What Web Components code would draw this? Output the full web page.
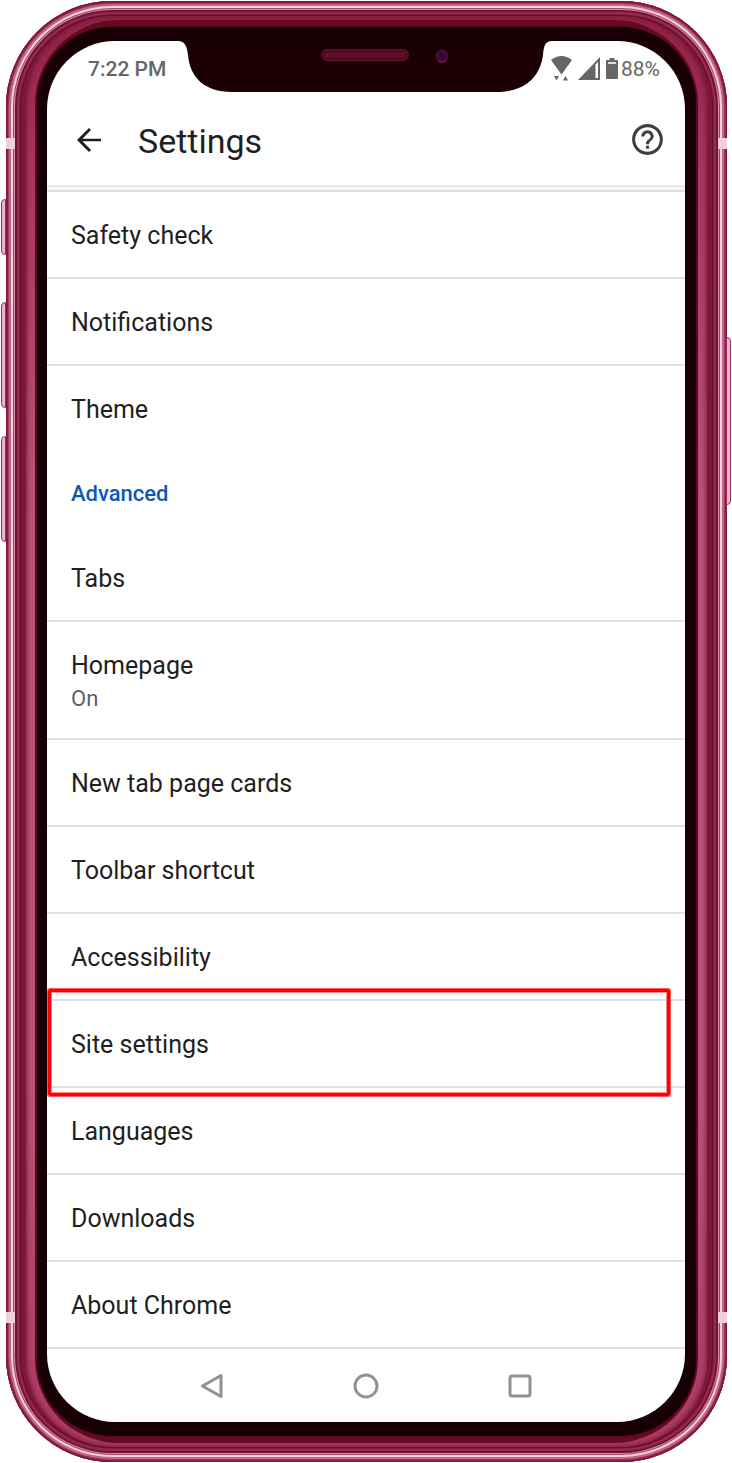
<!DOCTYPE html>
<html lang="en">
<head>
<meta charset="utf-8">
<meta name="viewport" content="width=device-width, initial-scale=1">
<title>Settings</title>
<style>
body {
    margin: 0;
    padding: 1px 5px 1px 6px;
    background: #fff;
    font-family: Roboto, "Liberation Sans", sans-serif;
    color: #1f1f1f;
}
</style>
</head>
<body>
<phone-frame>
    <status-bar time="7:22 PM" battery="88%"></status-bar>
    <app-header>Settings</app-header>
    <main>
        <settings-row>Safety check</settings-row>
        <settings-row>Notifications</settings-row>
        <settings-row last>Theme</settings-row>
        <settings-section>Advanced</settings-section>
        <settings-row>Tabs</settings-row>
        <settings-row>Homepage<span slot="summary">On</span></settings-row>
        <settings-row>New tab page cards</settings-row>
        <settings-row>Toolbar shortcut</settings-row>
        <settings-row>Accessibility</settings-row>
        <settings-row highlighted>Site settings</settings-row>
        <settings-row>Languages</settings-row>
        <settings-row>Downloads</settings-row>
        <settings-row>About Chrome</settings-row>
    </main>
    <nav-bar></nav-bar>
</phone-frame>

<script>
function makeTemplate(html) {
    const template = document.createElement('template');
    template.innerHTML = html;
    return template;
}

// shared base: clones the template of the class into an open shadow root
class BaseElement extends HTMLElement {
    constructor() {
        super();
        this.attachShadow({ mode: 'open' });
        this.shadowRoot.appendChild(this.constructor.template.content.cloneNode(true));
    }
}

class PhoneFrame extends BaseElement {
    static template = makeTemplate(`
<style>
:host {
    display: block;
    position: relative;
}
.edge {
    padding: 14px;
    border-radius: 106px;
    background: #861b40;
    box-shadow:
        inset 0 0 0 1px #7a1838,
        inset 0 0 0 2px #8a2046,
        inset 0 0 0 3px #a03a62,
        inset 0 0 0 5px #c0688c,
        inset 0 0 0 7px #f6d0df,
        inset 0 0 0 8px #a8476c,
        inset 0 0 0 9px #d48aaa,
        inset 0 0 0 11px #74122f,
        inset 0 0 0 13px #932c54;
}
.groove {
    padding: 1px 6px;
    border-radius: 92px;
    background: #7e1839;
    box-shadow: inset 0 0 0 1px #650d29;
}
.band {
    padding: 4px 9px;
    border-radius: 88px;
    background: linear-gradient(#8e2248, #a53560 10%, #b9527b 35%, #b9527b 75%, #a83a64);
    box-shadow: inset 0 0 4px 1px #80193f;
}
.rim {
    padding: 7px 2px;
    border-radius: 84px;
    background: #650a20;
}
.bezel {
    padding: 14px 11px 14px 10px;
    border-radius: 76px;
    background: #160004;
    box-shadow: 0 0 2px #3a0412;
}
.screen {
    border-radius: 68px;
    background: #fff;
}
.key {
    position: absolute;
    box-sizing: border-box;
    width: 5px;
    border: 1px solid #9c3058;
    background: #f0b4ca;
}
.left { left: -5px; border-radius: 4px 0 0 4px; }
.right { right: -4px; border-radius: 0 4px 4px 0; }
.mute { top: 198px; height: 56px; }
.up { top: 301px; height: 106px; }
.down { top: 435px; height: 106px; }
.power { top: 336px; height: 168px; }
.antenna {
    position: absolute;
    width: 9px;
    height: 11px;
    background: #f3cfdd;
}
.antenna.west { left: 0; }
.antenna.east { right: 0; }
.antenna.high { top: 137px; }
.antenna.low { bottom: 139px; }
</style>
<div class="edge"><div class="groove"><div class="band"><div class="rim"><div class="bezel">
<div class="screen"><slot></slot></div>
</div></div></div></div></div>
<i class="key left mute"></i>
<i class="key left up"></i>
<i class="key left down"></i>
<i class="key right power"></i>
<i class="antenna west high"></i>
<i class="antenna east high"></i>
<i class="antenna west low"></i>
<i class="antenna east low"></i>
`);
}

class StatusBar extends BaseElement {
    static template = makeTemplate(`
<style>
:host {
    display: grid;
    grid-template-columns: 1fr auto 1fr;
    font-size: 21px;
    line-height: 24px;
    color: #666;
}
.time {
    padding: 16px 0 0 41px;
    font-weight: 500;
    white-space: nowrap;
}
.icons {
    display: flex;
    justify-content: flex-end;
    align-items: center;
    height: 24px;
    padding: 16px 25px 0 0;
}
svg { display: block; flex: none; }
.icons svg { margin-bottom: 2px; }
.wifi, .signal { margin-right: 6px; }
.battery { margin-right: 3px; }
</style>
<div class="time"></div>
<svg class="notch" width="372" height="51" viewBox="0 0 372 51" aria-hidden="true">
    <path fill="#1b0005" d="M0 0C6 1 8 5 9 14C11 37 26 51 53 51H317C345 51 361 37 364 14C365 4 366 1 372 0Z"/>
    <rect x="142.500" y="8.500" width="87" height="11" rx="5.500" fill="#52081f" stroke="#6b1230"/>
    <path d="M146 14H226" stroke="#7a1433" stroke-width="5" stroke-dasharray="1 1"/>
    <circle cx="263" cy="15" r="6.500" fill="#4a0a32"/>
    <ellipse cx="263" cy="15" rx="3" ry="5" fill="#2a0a44"/>
    <path d="M259 20q4 3 8 0" fill="none" stroke="#8c1c3c"/>
</svg>
<div class="icons">
    <svg class="wifi" width="21" height="25" viewBox="0 0 21 25" fill="#666" aria-hidden="true">
        <path d="M0 4Q10.500-4 21 4L10.500 18.500ZM3 20H8L5.500 24.500ZM12 24.500H17L14.500 20Z"/>
    </svg>
    <svg class="signal" width="22" height="23" viewBox="0 0 22 23" aria-hidden="true">
        <path fill="#666" d="M0 23L22 0V23Z"/>
        <path fill="#fff" d="M17.500 7.500L20 5V21H17.500Z"/>
    </svg>
    <svg class="battery" width="12" height="21" viewBox="0 0 12 21" aria-hidden="true">
        <path fill="#666" d="M3.500 0H8.500V2H11Q12 2 12 3V20Q12 21 11 21H1Q0 21 0 20V3Q0 2 1 2H3.500Z"/>
        <path fill="#ddd" d="M2 4H10V6H2Z"/>
    </svg>
    <span class="level"></span>
</div>
`);

    connectedCallback() {
        this.shadowRoot.querySelector('.time').textContent = this.getAttribute('time');
        this.shadowRoot.querySelector('.level').textContent = this.getAttribute('battery');
    }
}

class AppHeader extends BaseElement {
    static template = makeTemplate(`
<style>
:host {
    display: block;
    border-bottom: 2px solid #dedfde;
}
header {
    display: flex;
    align-items: center;
    height: 91px;
    padding: 2px 19px 0 24px;
    border-bottom: 2px solid #e9e9e8;
    box-shadow: 0 3px #f6f6f4;
    margin-bottom: 3px;
}
button {
    padding: 0;
    border: 0;
    background: none;
    color: #1f1f1f;
}
svg { display: block; }
h1 {
    flex: 1;
    margin: 0 0 0 31px;
    padding-top: 2px;
    font-size: 34px;
    font-weight: 400;
    line-height: 44px;
}
</style>
<header>
    <button type="button" aria-label="Back">
        <svg width="36" height="36" viewBox="0 0 24 24" fill="currentColor"><path d="M20 11.100H7.600l5.700-5.700L12 4l-8 8 8 8 1.400-1.400-5.800-5.700H20z"/></svg>
    </button>
    <h1><slot></slot></h1>
    <button type="button" aria-label="Help">
        <svg width="37" height="37" viewBox="0 0 24 24" fill="#3c4043"><path d="M11 18h2v-2h-2v2zm1-16C6.480 2 2 6.480 2 12s4.480 10 10 10 10-4.480 10-10S17.520 2 12 2zm0 18c-4.410 0-8-3.590-8-8s3.590-8 8-8 8 3.590 8 8-3.590 8-8 8zm0-14c-2.210 0-4 1.790-4 4h2c0-1.100.9-2 2-2s2 .9 2 2c0 2-3 1.750-3 5h2c0-2.250 3-2.500 3-5 0-2.210-1.790-4-4-4z"/></svg>
    </button>
</header>
`);
}

class SettingsRow extends BaseElement {
    static template = makeTemplate(`
<style>
:host {
    display: block;
    position: relative;
    border-bottom: 2px solid #e0e0e0;
}
:host([last]) {
    border-bottom-color: transparent;
}
/* the marker reaches a little over the neighbouring rows */
:host([highlighted])::after {
    content: "";
    position: absolute;
    inset: -12px 15px -10px 1px;
    border: 3px solid #fb0007;
    border-radius: 2px;
    box-shadow: 0 0 0 1px #ff5a5a, inset 0 0 0 1px #ff8a8a;
    pointer-events: none;
    z-index: 1;
}
a {
    display: block;
    padding: 28px 24px 25px;
    font-size: 25px;
    line-height: 32px;
    color: inherit;
    text-decoration: none;
}
::slotted([slot="summary"]) {
    display: block;
    margin-top: 3px;
    font-size: 22px;
    line-height: 28px;
    color: #5f6062;
}
</style>
<a href="#"><slot></slot><slot name="summary"></slot></a>
`);
}

class SettingsSection extends BaseElement {
    static template = makeTemplate(`
<style>
:host { display: block; }
h2 {
    margin: 0;
    padding: 25px 24px;
    font-size: 22px;
    font-weight: 500;
    line-height: 32px;
    color: #0b57b8;
}
</style>
<h2><slot></slot></h2>
`);
}

class NavBar extends BaseElement {
    static template = makeTemplate(`
<style>
:host { display: block; }
nav {
    display: grid;
    grid-template-columns: repeat(3, 1fr);
    padding: 0 88px;
}
button {
    display: flex;
    justify-content: center;
    align-items: center;
    height: 73px;
    padding: 0;
    border: 0;
    background: none;
}
svg {
    fill: none;
    stroke: #929292;
    stroke-width: 3;
    stroke-linejoin: round;
}
</style>
<nav>
    <button type="button" aria-label="Back"><svg width="26" height="26" viewBox="0 0 26 26"><path d="M3.500 13L22 2.500V23.500Z"/></svg></button>
    <button type="button" aria-label="Home"><svg width="26" height="26" viewBox="0 0 26 26"><circle cx="13" cy="13" r="11"/></svg></button>
    <button type="button" aria-label="Recent apps"><svg width="26" height="26" viewBox="0 0 26 26"><rect x="3" y="3" width="20" height="20" rx="2"/></svg></button>
</nav>
`);
}

customElements.define('phone-frame', PhoneFrame);
customElements.define('status-bar', StatusBar);
customElements.define('app-header', AppHeader);
customElements.define('settings-row', SettingsRow);
customElements.define('settings-section', SettingsSection);
customElements.define('nav-bar', NavBar);
</script>
</body>
</html>
